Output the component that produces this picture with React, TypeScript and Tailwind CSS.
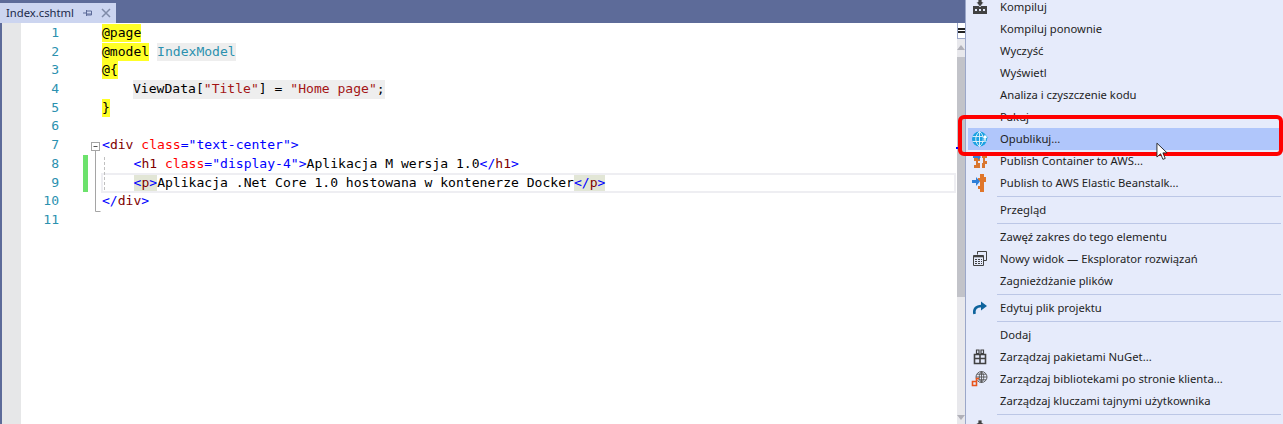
import React from "react";

const Tag = ({ children }: { children: React.ReactNode }) => <span className="text-[#0000ff]">{children}</span>;
const El = ({ children }: { children: React.ReactNode }) => <span className="text-[#800000]">{children}</span>;
const Attr = ({ children }: { children: React.ReactNode }) => <span className="text-[#ff0000]">{children}</span>;
const Yel = ({ children }: { children: React.ReactNode }) => <span className="bg-[#ffff26] inline-block h-[18px]">{children}</span>;
const Str = ({ children }: { children: React.ReactNode }) => <span className="text-[#a31515]">{children}</span>;
const Match = ({ children }: { children: React.ReactNode }) => <span className="bg-[#e2e6d6] inline-block h-[19px]">{children}</span>;

const codeLines: React.ReactNode[] = [
  <Yel>@page</Yel>,
  <>
    <Yel>@model</Yel> <span className="bg-[#eeeeee] text-[#2b91af] inline-block h-[18px]">IndexModel</span>
  </>,
  <Yel>@{"{"}</Yel>,
  <span className="inline-block h-[19px] bg-[#eeeeee] ml-[31px]">
    ViewData[<Str>"Title"</Str>] = <Str>"Home page"</Str>;
  </span>,
  <Yel>{"}"}</Yel>,
  "",
  <>
    <Tag>&lt;</Tag><El>div</El> <Attr>class</Attr><Tag>="text-center"&gt;</Tag>
  </>,
  <span className="ml-[31.5px]">
    <Tag>&lt;</Tag><El>h1</El> <Attr>class</Attr><Tag>="display-4"&gt;</Tag>Aplikacja M wersja 1.0<Tag>&lt;/</Tag><El>h1</El><Tag>&gt;</Tag>
  </span>,
  <span className="ml-[31.5px]">
    <Match><Tag>&lt;</Tag><El>p</El><Tag>&gt;</Tag></Match>Aplikacja .Net Core 1.0 hostowana w kontenerze Docker<Match><Tag>&lt;/</Tag><El>p</El><Tag>&gt;</Tag></Match>
  </span>,
  <>
    <Tag>&lt;/</Tag><El>div</El><Tag>&gt;</Tag>
  </>,
  "",
];

const BuildIcon = () => (
  <svg width="16" height="16" viewBox="0 0 16 16">
    <path d="M1 7h14v8H1z" fill="#424242" />
    <path d="M3 10h2v2H3zM7 10h2v2H7zM11 10h2v2h-2z" fill="#e6ebfa" />
    <path d="M6 0h4v3h2L8 8 4 3h2z" fill="#424242" stroke="#e6ebfa" strokeWidth="0.8" />
  </svg>
);

const GlobeIcon = () => (
  <svg width="18" height="18" viewBox="0 0 18 18">
    <circle cx="8.5" cy="9" r="7.5" fill="#1ba1e2" />
    <path d="M1.5 6.5h14M1.5 11.5h14M8.5 1.5v15M8.5 1.5c-5 4-5 11 0 15M8.5 1.5c5 4 5 11 0 15" fill="none" stroke="#e6f3fb" strokeWidth="0.9" />
    <path d="M11 8l3-3.5L17 8h-2v3h-2V8z" fill="#ffffff" stroke="#1ba1e2" strokeWidth="0.5" />
  </svg>
);

const ContainerAwsIcon = () => (
  <svg width="16" height="16" viewBox="0 0 16 16">
    <path d="M2 5h6v3H6v2h2v5H2v-3h2V8H2zM10 2h5v3h-2v3h2v3h-2v4h-3v-5h1V5h-1z" fill="#d9762e" />
    <path d="M1 3h5V1l3 3-3 3V5H1z" fill="#2f7fd8" />
  </svg>
);

const BeanstalkIcon = () => (
  <svg width="16" height="18" viewBox="0 0 16 18">
    <path d="M8 0h4v3h2v5h-2v10H8v-3H6v-3h2V7H6V4h2z" fill="#e0762a" />
    <path d="M0 6h4V3l4 4.5L4 12V9H0z" fill="#2f7fd8" />
  </svg>
);

const NewViewIcon = () => (
  <svg width="16" height="16" viewBox="0 0 16 16" fill="none" stroke="#424242">
    <path d="M5.5 3.5v-3h9v9h-3" />
    <path d="M1.5 4.5h10v10h-10z" />
    <path d="M1.5 5.5h10" strokeWidth="1.6" />
    <path d="M3 8.5h7M3 10.5h7M3 12.5h7" strokeDasharray="2 1" />
  </svg>
);

const EditIcon = () => (
  <svg width="16" height="14" viewBox="0 0 16 14">
    <path d="M2.5 13C1.5 8 4 5 9.5 5" fill="none" stroke="#0e639c" strokeWidth="2.6" />
    <path d="M9 0.5L15 5l-6 4.5z" fill="#0e639c" />
  </svg>
);

const NuGetIcon = () => (
  <svg width="14" height="16" viewBox="0 0 14 16" fill="none" stroke="#424242">
    <path d="M1.5 5.5h11v9h-11z" strokeWidth="1.6" />
    <path d="M1 9.5h12M7 5v10" strokeWidth="1.6" />
    <path d="M3.5 1h2.5v3.5H3.5zM8 1h2.5v3.5H8z" strokeWidth="1.2" />
  </svg>
);

const LibManIcon = () => (
  <svg width="18" height="16" viewBox="0 0 18 16">
    <g fill="none" stroke="#555555" strokeWidth="0.9">
      <circle cx="10.5" cy="6" r="5.5" />
      <path d="M5 6h11M10.5 .5v11M10.5 .5c-3 3-3 8 0 11M10.5 .5c3 3 3 8 0 11M6 3.2h9M6 8.8h9" />
    </g>
    <path d="M1.5 10.5h4v4h-4zM5.5 10.5v-3h2.5" fill="#e6ebfa" stroke="#e8541c" strokeWidth="1.6" />
  </svg>
);

type Entry = { label?: string; icon?: React.ReactNode; hover?: boolean; sep?: boolean };

const menu: Entry[] = [
  { label: "Kompiluj", icon: <BuildIcon /> },
  { label: "Kompiluj ponownie" },
  { label: "Wyczyść" },
  { label: "Wyświetl" },
  { label: "Analiza i czyszczenie kodu" },
  { label: "Pakuj" },
  { label: "Opublikuj...", icon: <GlobeIcon />, hover: true },
  { label: "Publish Container to AWS...", icon: <ContainerAwsIcon /> },
  { label: "Publish to AWS Elastic Beanstalk...", icon: <BeanstalkIcon /> },
  { sep: true },
  { label: "Przegląd" },
  { sep: true },
  { label: "Zawęź zakres do tego elementu" },
  { label: "Nowy widok — Eksplorator rozwiązań", icon: <NewViewIcon /> },
  { label: "Zagnieżdżanie plików" },
  { sep: true },
  { label: "Edytuj plik projektu", icon: <EditIcon /> },
  { sep: true },
  { label: "Dodaj" },
  { label: "Zarządzaj pakietami NuGet...", icon: <NuGetIcon /> },
  { label: "Zarządzaj bibliotekami po stronie klienta...", icon: <LibManIcon /> },
  { label: "Zarządzaj kluczami tajnymi użytkownika" },
  { sep: true },
  { label: "Ustaw jako projekt startowy", icon: <BuildIcon /> },
];

export default function App() {
  return (
    <div className="relative flex w-[1283px] h-[424px] overflow-hidden bg-white font-['Noto_Sans',sans-serif]">
      {/* editor */}
      <div className="flex flex-col w-[965px] shrink-0">
        <div className="flex items-end h-[23px] bg-[#5d6b99] shrink-0">
          <div className="flex items-center h-[20px] w-[116px] bg-[#ccd5f0] pl-[6px] text-[11.25px] text-[#1b2a4a]">
            <span className="w-[76px]">Index.cshtml</span>
            <svg width="10" height="10" viewBox="0 0 10 10" className="ml-[1px]" fill="none" stroke="#5d6b99">
              <path d="M0 5h3M3.5 2v6M3.5 3h5v4h-5M3.5 6h5" />
            </svg>
            <svg width="10" height="10" viewBox="0 0 10 10" className="ml-[8px]" fill="none" stroke="#7f8ba8" strokeWidth="1.5">
              <path d="M1 1l8 8M9 1l-8 8" />
            </svg>
          </div>
        </div>

        <div className="flex flex-1 border-l-2 border-[#5d6b99]">
          <div className="w-[19px] bg-[#e6e7e8] shrink-0" />
          <div className="relative flex-1 flex flex-col pt-[1px] font-['DejaVu_Sans_Mono',monospace] text-[13.07px] text-black">
            {/* outlining and indent guide */}
            <svg className="absolute left-[68px] top-[118px]" width="20" height="72" viewBox="0 0 20 72" fill="none">
              <rect x="2.5" y="1.5" width="8" height="8" fill="#fff" stroke="#a5a5a5" />
              <path d="M4.5 5.5h4" stroke="#555" />
              <path d="M6.5 10v60.5h5" stroke="#a5a5a5" />
              <path d="M15.5 16v34" stroke="#c0c0c0" strokeDasharray="3 2" />
            </svg>
            {codeLines.map((line, i) => (
              <div key={i} className="flex h-[18.7px] leading-[18.7px] shrink-0">
                <div className="w-[38px] text-right text-[#2b91af] shrink-0">{i + 1}</div>
                <div className="w-[24px] shrink-0 flex">
                  {(i === 7 || i === 8) && <div className="ml-[24px] w-[5px] bg-[#6ce26c] shrink-0" />}
                </div>
                <div
                  className={
                    "ml-[19px] flex-1 whitespace-pre " +
                    (i === 8 ? "outline-2 -outline-offset-1 outline-[#eeeef2] mr-[2px]" : "")
                  }
                >
                  {line}
                </div>
              </div>
            ))}
          </div>
          {/* scrollbar */}
          <div className="flex flex-col items-center w-[8px] bg-[#e8e8ec] shrink-0">
            <div className="flex items-center justify-center w-full h-[16px] bg-white border-l border-b border-[#9ba7c9]">
              <div className="w-[7px] h-[5px] border-y-2 border-[#222]" />
            </div>
            <div className="mt-[6px] w-0 h-0 border-l-[4px] border-r-[4px] border-b-[5px] border-l-transparent border-r-transparent border-b-[#b0b0b8]" />
            <div className="mt-[7px] w-full h-[240px] bg-[#c2c3c9]" />
            <div className="mt-[118px] w-0 h-0 border-l-[4px] border-r-[4px] border-t-[5px] border-l-transparent border-r-transparent border-t-[#b0b0b8]" />
          </div>
        </div>
      </div>

      {/* context menu */}
      <div className="flex-1 -mt-[4px] pl-[2px] pr-[2px] bg-[#e6ebfb] border-l border-[#9ba7c9] text-[11.25px] text-[#1e1e1e]">
        {menu.map((m, i) =>
          m.sep ? (
            <div key={i} className="h-[5px] flex items-center pl-[29px]">
              <div className="w-full h-px bg-[#bcc7e6]" />
            </div>
          ) : (
            <div
              key={i}
              className={"flex items-center h-[22px] whitespace-nowrap " + (m.hover ? "bg-[#b0c6fb]" : "")}
            >
              <div className="flex items-center justify-center w-[24px] mr-[8px] shrink-0">{m.icon}</div>
              {m.label}
            </div>
          )
        )}
      </div>

      {/* annotation over the menu */}
      <div className="absolute left-[958px] top-[115px] w-[325px] h-[41px] border-[4px] border-[#ff0000] rounded-[6px]" />
      <div className="absolute left-[956px] top-[147px] w-[2px] h-[2px] bg-[#0000ff]" />
      <svg className="absolute left-[1156px] top-[142px]" width="12" height="19" viewBox="0 0 13 20">
        <path d="M1 1v15l4-3.5 2.5 6 2.5-1-2.5-6H12z" fill="#fff" stroke="#222" />
      </svg>
    </div>
  );
}
